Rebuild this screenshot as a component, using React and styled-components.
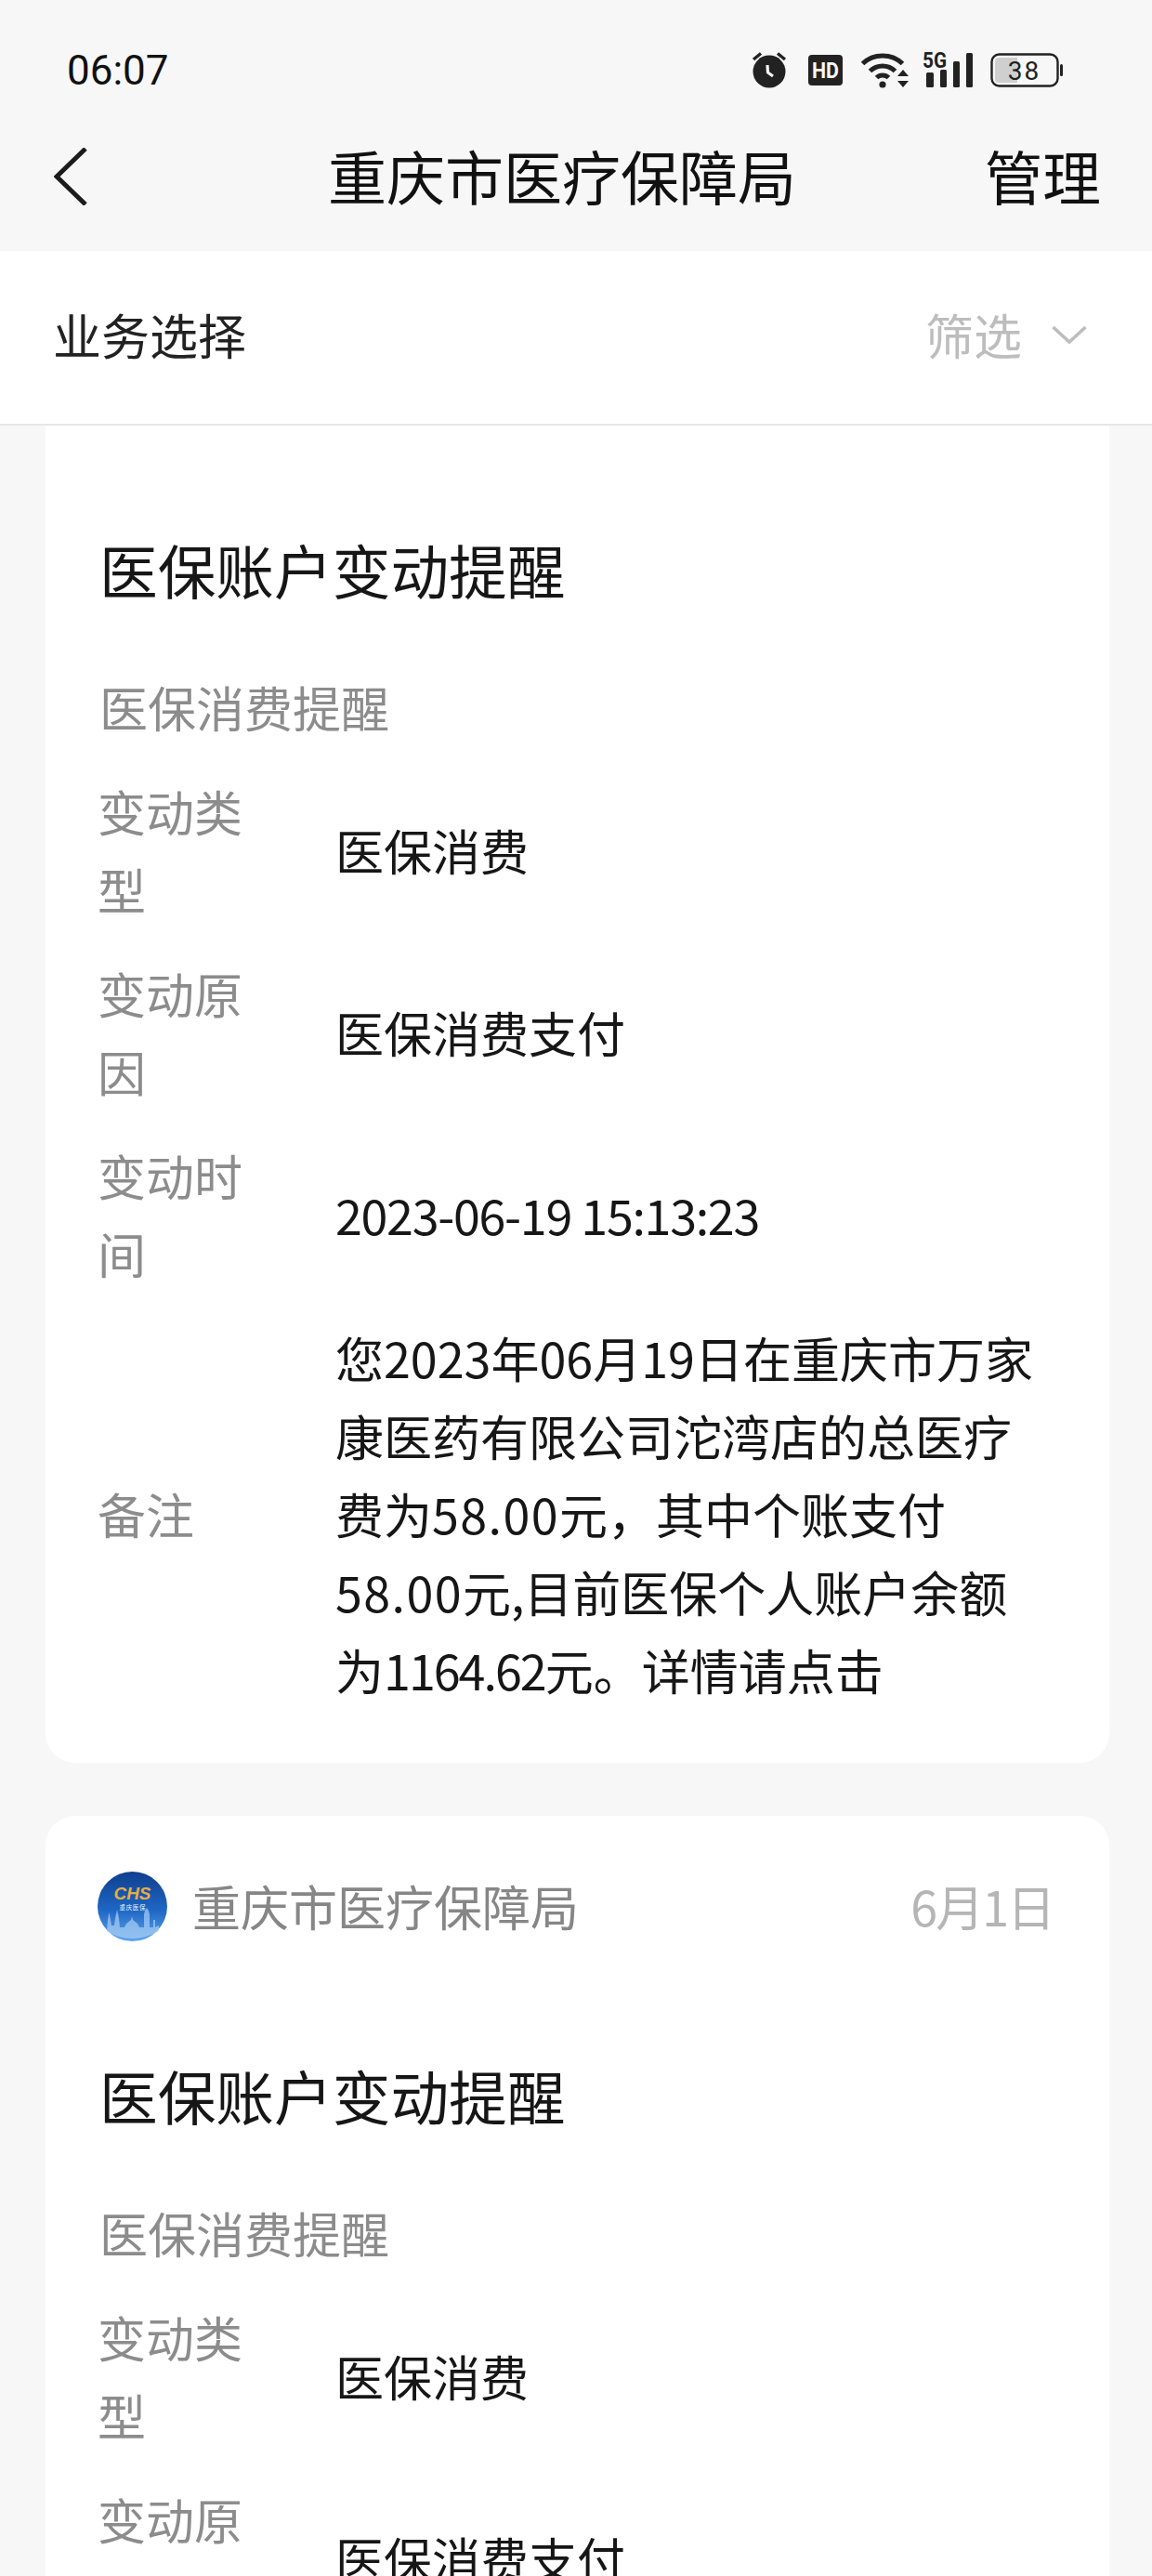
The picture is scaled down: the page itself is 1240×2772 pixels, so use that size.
import styled, { createGlobalStyle } from 'styled-components';

const GlobalStyle = createGlobalStyle`
  html, body {
    margin: 0;
    padding: 0;
    background: #f7f7f7;
  }

  * {
    box-sizing: border-box;
  }
`;

const Page = styled.div`
  width: 1240px;
  height: 2772px;
  overflow: hidden;
  background: #f7f7f7;
  color: #1a1a1a;
  font-family: 'Noto Sans CJK SC', 'Noto Sans', sans-serif;
`;

const StatusBar = styled.div`
  height: 146px;
  padding: 6px 96px 0 72px;
  display: flex;
  justify-content: space-between;
  align-items: center;
`;

const Clock = styled.span`
  font-family: Roboto, sans-serif;
  font-size: 44px;
  line-height: 48px;
  color: #111;
`;

const StatusIcons = styled.div`
  margin-top: -2px;
  display: flex;
  align-items: center;
`;

const NavBar = styled.div`
  height: 124px;
  padding: 0 55px 40px 58px;
  display: flex;
  align-items: center;
`;

const BackButton = styled.div`
  margin-top: 4px;
  display: flex;
  align-items: center;
`;

const NavTitle = styled.div`
  margin-left: 259px;
  font-size: 63px;
  line-height: 80px;
  color: #111;
`;

const NavAction = styled.div`
  margin-left: auto;
  font-size: 62.7px;
  line-height: 80px;
  color: #111;
`;

const FilterBar = styled.div`
  height: 188px;
  padding: 0 70px 6px 57px;
  display: flex;
  justify-content: space-between;
  align-items: center;
  background: #fff;
  border-bottom: 2px solid #e6e6e6;
`;

const FilterLabel = styled.div`
  font-size: 52px;
  line-height: 70px;
  color: #222;
`;

const FilterAction = styled.div`
  display: flex;
  align-items: center;
  gap: 32px;
  font-size: 52px;
  line-height: 70px;
  color: #bdbdbd;
`;

const List = styled.div`
  padding: 0 46px 0 49px;
  display: flex;
  flex-direction: column;
  gap: 57px;
`;

const Card = styled.div`
  background: #fff;
  padding: ${(p) => (p.$clipped ? '107px' : '49px')} 60px 58px 56px;
  border-radius: ${(p) => (p.$clipped ? '0 0 32px 32px' : '32px')};
`;

const CardHeader = styled.div`
  height: 96px;
  margin-bottom: 108px;
  display: flex;
  align-items: center;
`;

const Avatar = styled.div`
  width: 75px;
  height: 75px;
  margin-right: 27px;
  flex: none;
`;

const Sender = styled.div`
  flex: 1;
  font-size: 52px;
  line-height: 70px;
  color: #868686;
`;

const CardDate = styled.div`
  font-size: 52px;
  line-height: 70px;
  letter-spacing: -2px;
  color: #b5b5b5;
`;

const CardTitle = styled.div`
  margin-left: 2px;
  font-size: 62.7px;
  line-height: 94px;
  color: #161616;
`;

const CardSubtitle = styled.div`
  margin: 60px 0 28px 2px;
  font-size: 52px;
  line-height: 84px;
  color: #8c8c8c;
`;

const Rows = styled.div`
  display: flex;
  flex-direction: column;
  gap: 28px;
`;

const Row = styled.div`
  display: grid;
  grid-template-columns: 156px 760px;
  column-gap: 100px;
  align-items: center;
`;

const RowLabel = styled.div`
  font-size: 52px;
  line-height: 84px;
  color: #8c8c8c;
`;

const RowValue = styled.div`
  font-size: 52px;
  line-height: 84px;
  color: #161616;
`;

// the digits in the picture are proportional: a narrow 1, wider 0 and 5
const Digits = styled.span`
  letter-spacing: ${(p) => p.$spacing};
`;

function AlarmIcon() {
  return (
    <svg width="38" height="40" viewBox="0 0 38 40" style={{ marginRight: 23 }}>
      <circle cx="19" cy="22" r="17.5" fill="#222" />
      <path d="M2 9 L10 2.5 M36 9 L28 2.5" stroke="#222" strokeWidth="3.4" />
      <path d="M17 15 L17.5 23 L23 27" fill="none" stroke="#f7f7f7" strokeWidth="3.2" />
    </svg>
  );
}

function HdIcon() {
  return (
    <svg width="37" height="33" viewBox="0 0 37 33" style={{ marginRight: 19 }}>
      <rect width="37" height="33" rx="4" fill="#222" />
      <text x="18.5" y="25" textAnchor="middle" fontFamily="Roboto, sans-serif" fontWeight="700" fontSize="23" textLength="29" lengthAdjust="spacingAndGlyphs" fill="#f7f7f7">HD</text>
    </svg>
  );
}

function WifiIcon() {
  return (
    <svg width="52" height="40" viewBox="0 0 52 40" style={{ marginRight: 15 }}>
      <g fill="none" stroke="#222" strokeWidth="5">
        <path d="M2.5 13.5 C14 2 34 2 45.5 13.5" />
        <path d="M10.5 21.5 C18 14 30 14 37.5 21.5" />
        <path d="M17.5 28.5 C21 25 27 25 30.5 28.5" />
      </g>
      <circle cx="24" cy="36" r="3.6" fill="#222" />
      <path d="M40 27 L46 20 L52 27 Z M40 32 L52 32 L46 39 Z" fill="#222" />
    </svg>
  );
}

function SignalIcon() {
  return (
    <svg width="54" height="38" viewBox="0 0 54 38" style={{ marginRight: 19 }}>
      <text x="0" y="17" fontFamily="Roboto, sans-serif" fontWeight="700" fontSize="23" textLength="26" lengthAdjust="spacingAndGlyphs" fill="#222">5G</text>
      <rect x="4" y="22" width="8" height="16" rx="1.5" fill="#222" />
      <rect x="19" y="19" width="7" height="19" rx="1.5" fill="#222" />
      <rect x="33" y="10" width="7" height="28" rx="1.5" fill="#222" />
      <rect x="47" y="1" width="7" height="37" rx="1.5" fill="#222" />
    </svg>
  );
}

function BatteryIcon() {
  return (
    <svg width="78" height="37" viewBox="0 0 78 37">
      <rect x="1.5" y="1.5" width="71" height="34" rx="8" fill="none" stroke="#222" strokeWidth="2.4" />
      <path d="M5 9 Q5 5 9 5 L29 5 L29 32 L9 32 Q5 32 5 28 Z" fill="#cfcfcf" />
      <rect x="75" y="12" width="3" height="13" rx="1.5" fill="#222" />
      <text x="36.5" y="29" textAnchor="middle" fontFamily="Roboto, sans-serif" fontSize="28" letterSpacing="2" fill="#222">38</text>
    </svg>
  );
}

function Logo() {
  return (
    <svg width="75" height="75" viewBox="0 0 75 75">
      <defs>
        <linearGradient id="logoBlue" x1="0" y1="0" x2="0" y2="1">
          <stop offset="0" stopColor="#0f3f8e" />
          <stop offset="0.55" stopColor="#1e66c4" />
          <stop offset="1" stopColor="#5fa5ec" />
        </linearGradient>
      </defs>
      <circle cx="37.5" cy="37.5" r="37.5" fill="url(#logoBlue)" />
      <text x="37.5" y="30" textAnchor="middle" fontFamily="'Liberation Sans', sans-serif" fontWeight="700" fontStyle="italic" fontSize="18" textLength="40" lengthAdjust="spacingAndGlyphs" fill="#e8ac45">CHS</text>
      <text x="37.5" y="41" textAnchor="middle" fontFamily="'Noto Sans CJK SC', sans-serif" fontSize="6.5" textLength="28" fill="#eaf2fb">重庆医保</text>
      <path
        d="M10 64 L11 52 L12.5 44 L14 52 L15 58 L18 58 L19 50 L21 41 L23 50 L24 60 L29 60 L31 56 L36 52 L37 48 L38 52 L43 56 L45 60 L50 60 L50 46 L51 42 L53 39 L55 42 L56 46 L56 60 L60 60 L60 52 L62 52 L62 60 L66 58 L66 64 Q52 72 37 72 Q22 72 10 64 Z"
        fill="#a9d0f5"
        opacity="0.7"
      />
    </svg>
  );
}

const rows = [
  { label: '变动类型', value: '医保消费' },
  { label: '变动原因', value: '医保消费支付' },
  { label: '变动时间', value: <Digits $spacing="-1.3px">2023-06-19 15:13:23</Digits> },
  {
    label: '备注',
    value: (
      <>
        您2023年06月19日在重庆市万家康医药有限公司沱湾店的总医疗费为
        <Digits $spacing="1.4px">58.00</Digits>
        元，其中个账支付
        <Digits $spacing="1.4px">58.00</Digits>
        元,目前医保个人账户余额为
        <Digits $spacing="-2px">1164.62</Digits>
        元。详情请点击
      </>
    ),
  },
];

function CardBody({ items }) {
  return (
    <>
      <CardTitle>医保账户变动提醒</CardTitle>
      <CardSubtitle>医保消费提醒</CardSubtitle>
      <Rows>
        {items.map((row) => (
          <Row key={row.label}>
            <RowLabel>{row.label}</RowLabel>
            <RowValue>{row.value}</RowValue>
          </Row>
        ))}
      </Rows>
    </>
  );
}

export default function App() {
  return (
    <Page>
      <GlobalStyle />
      <StatusBar>
        <Clock>06:07</Clock>
        <StatusIcons>
          <AlarmIcon />
          <HdIcon />
          <WifiIcon />
          <SignalIcon />
          <BatteryIcon />
        </StatusIcons>
      </StatusBar>
      <NavBar>
        <BackButton>
          <svg width="36" height="62" viewBox="0 0 36 62">
            <path d="M34 1 L3 31 L34 61" fill="none" stroke="#1c1c1c" strokeWidth="5" />
          </svg>
        </BackButton>
        <NavTitle>重庆市医疗保障局</NavTitle>
        <NavAction>管理</NavAction>
      </NavBar>
      <FilterBar>
        <FilterLabel>业务选择</FilterLabel>
        <FilterAction>
          筛选
          <svg width="38" height="20" viewBox="0 0 38 20">
            <path d="M1.5 2 L19 18 L36.5 2" fill="none" stroke="#bdbdbd" strokeWidth="3.6" />
          </svg>
        </FilterAction>
      </FilterBar>
      <List>
        <Card $clipped>
          <CardBody items={rows} />
        </Card>
        <Card>
          <CardHeader>
            <Avatar>
              <Logo />
            </Avatar>
            <Sender>重庆市医疗保障局</Sender>
            <CardDate>6月1日</CardDate>
          </CardHeader>
          <CardBody items={rows.slice(0, 2)} />
        </Card>
      </List>
    </Page>
  );
}
